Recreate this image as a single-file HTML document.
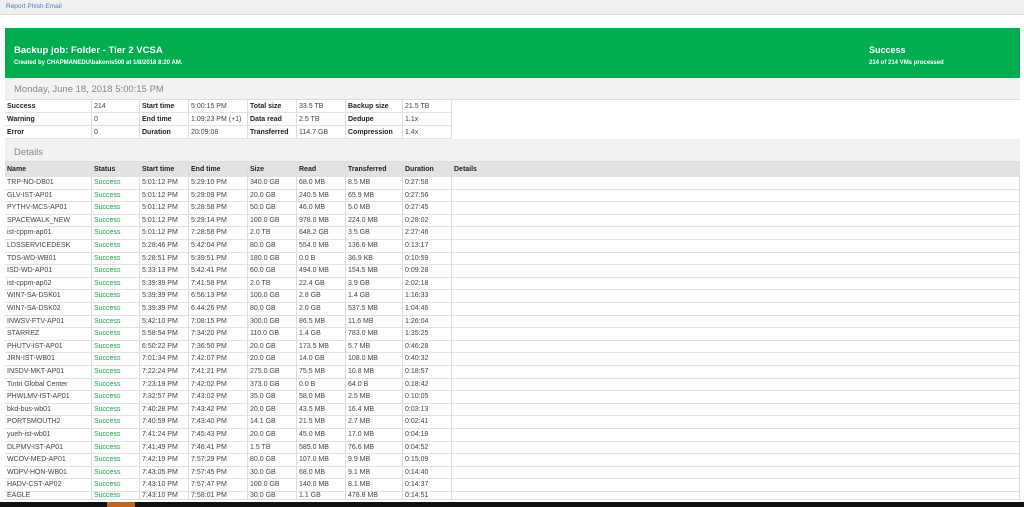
<!DOCTYPE html>
<html><head><meta charset="utf-8"><style>
*{margin:0;padding:0;box-sizing:border-box}
body{width:1024px;height:507px;overflow:hidden;background:#fff;font-family:"Liberation Sans",sans-serif;position:relative;color:#444}
.top{position:absolute;left:0;top:0;width:1024px;height:15px;background:#f0f0f2;border-bottom:1px solid #ddd}
.top span{position:absolute;left:6px;top:3px;font-size:6.5px;color:#3b7fc4}
.green{position:absolute;left:5px;top:28px;width:1015px;height:50px;background:#00ad50;color:#fff}
.g1{position:absolute;left:9px;top:17px;font-size:9.5px;font-weight:bold}
.g2{position:absolute;left:9px;top:32px;font-size:6px;font-weight:bold}
.g3{position:absolute;left:864px;top:17px;font-size:9px;font-weight:bold}
.g4{position:absolute;left:864px;top:32px;font-size:6px;font-weight:bold}
.gray{position:absolute;left:5px;width:1015px;background:#f2f2f2;border-bottom:1px solid #ddd}
.h{position:absolute;left:9px;font-size:9.5px;color:#888}
.c{position:absolute;font-size:7px;white-space:nowrap;height:12.6px;line-height:12.6px;padding-left:2px;border-right:1px solid #ddd;border-bottom:1px solid #e2e2e2;overflow:hidden}
.b{font-weight:bold;color:#222}
.s{color:#1aa64e}
.bar{position:absolute;left:0;top:502px;width:1024px;height:5px;background:#111}
</style></head><body>
<div class="top"><span>Report Phish Email</span></div>
<div class="green"><div class="g1">Backup job: Folder - Tier 2 VCSA</div><div class="g2">Created by CHAPMANEDU\bakonis500 at 1/8/2018 8:20 AM.</div><div class="g3">Success</div><div class="g4">214 of 214 VMs processed</div></div>
<div class="gray" style="top:78px;height:22px"><div class="h" style="top:6px">Monday, June 18, 2018 5:00:15 PM</div></div>
<div class="gray" style="top:139px;height:23px"><div class="h" style="top:8px">Details</div></div>
<div style="position:absolute;left:5px;top:162px;width:1015px;height:15px;background:#e2e2e2"></div>
<div id="t"></div>
<div class="bar"></div>
<div style="position:absolute;left:107px;top:502px;width:28px;height:5px;background:#c0651e"></div>
<script>
var X=[5,92,140,189,248,297,346,403,452,1020];
var out='';
function cell(x,w,y,h,txt,cls){out+='<div class="c '+(cls||'')+'" style="left:'+x+'px;top:'+y+'px;width:'+w+'px;height:'+h+'px;line-height:'+h+'px">'+txt+'</div>';}
var sum=[["Success","214","Start time","5:00:15 PM","Total size","33.5 TB","Backup size","21.5 TB"],["Warning","0","End time","1:09:23 PM (+1)","Data read","2.5 TB","Dedupe","1.1x"],["Error","0","Duration","20:09:08","Transferred","114.7 GB","Compression","1.4x"]];
sum.forEach(function(r,i){var y=100+i*13;r.forEach(function(t,j){cell(X[j],X[j+1]-X[j],y,13,t,j%2==0?'b':'')});});
var hd=["Name","Status","Start time","End time","Size","Read","Transferred","Duration","Details"];
hd.forEach(function(t,j){cell(X[j],X[j+1]-X[j],162,15,t,'b')});
var rows=`TRP-NO-DB01|5:01:12 PM|5:29:10 PM|340.0 GB|68.0 MB|8.5 MB|0:27:58
GLV-IST-AP01|5:01:12 PM|5:29:09 PM|20.0 GB|240.5 MB|65.9 MB|0:27:56
PYTHV-MCS-AP01|5:01:12 PM|5:28:58 PM|50.0 GB|46.0 MB|5.0 MB|0:27:45
SPACEWALK_NEW|5:01:12 PM|5:29:14 PM|100.0 GB|978.0 MB|224.0 MB|0:28:02
ist-cppm-ap01|5:01:12 PM|7:28:58 PM|2.0 TB|648.2 GB|3.5 GB|2:27:46
LDSSERVICEDESK|5:28:46 PM|5:42:04 PM|80.0 GB|554.0 MB|136.6 MB|0:13:17
TDS-WD-WB01|5:28:51 PM|5:39:51 PM|180.0 GB|0.0 B|36.9 KB|0:10:59
ISD-WD-AP01|5:33:13 PM|5:42:41 PM|60.0 GB|494.0 MB|154.5 MB|0:09:28
ist-cppm-ap02|5:39:39 PM|7:41:58 PM|2.0 TB|22.4 GB|3.9 GB|2:02:18
WIN7-SA-DSK01|5:39:39 PM|6:56:13 PM|100.0 GB|2.8 GB|1.4 GB|1:16:33
WIN7-SA-DSK02|5:39:39 PM|6:44:26 PM|80.0 GB|2.0 GB|537.5 MB|1:04:46
INWSV-FTV-AP01|5:42:10 PM|7:08:15 PM|300.0 GB|86.5 MB|11.6 MB|1:26:04
STARREZ|5:58:54 PM|7:34:20 PM|110.0 GB|1.4 GB|783.0 MB|1:35:25
PHUTV-IST-AP01|6:50:22 PM|7:36:50 PM|20.0 GB|173.5 MB|5.7 MB|0:46:28
JRN-IST-WB01|7:01:34 PM|7:42:07 PM|20.0 GB|14.0 GB|108.0 MB|0:40:32
INSDV-MKT-AP01|7:22:24 PM|7:41:21 PM|275.0 GB|75.5 MB|10.8 MB|0:18:57
Tintri Global Center|7:23:19 PM|7:42:02 PM|373.0 GB|0.0 B|64.0 B|0:18:42
PHWLMV-IST-AP01|7:32:57 PM|7:43:02 PM|35.0 GB|58.0 MB|2.5 MB|0:10:05
bkd-bus-wb01|7:40:28 PM|7:43:42 PM|20.0 GB|43.5 MB|16.4 MB|0:03:13
PORTSMOUTH2|7:40:59 PM|7:43:40 PM|14.1 GB|21.5 MB|2.7 MB|0:02:41
yueh-ist-wb01|7:41:24 PM|7:45:43 PM|20.0 GB|45.0 MB|17.0 MB|0:04:19
DLPMV-IST-AP01|7:41:49 PM|7:46:41 PM|1.5 TB|585.0 MB|76.6 MB|0:04:52
WCOV-MED-AP01|7:42:19 PM|7:57:29 PM|80.0 GB|107.0 MB|9.9 MB|0:15:09
WDPV-HON-WB01|7:43:05 PM|7:57:45 PM|30.0 GB|68.0 MB|9.1 MB|0:14:40
HADV-CST-AP02|7:43:10 PM|7:57:47 PM|100.0 GB|140.0 MB|8.1 MB|0:14:37
EAGLE|7:43:10 PM|7:58:01 PM|30.0 GB|1.1 GB|478.8 MB|0:14:51`.split('\n');
rows.forEach(function(r,i){var p=r.split('|');var y=177+i*12.6;var v=[p[0],'Success',p[1],p[2],p[3],p[4],p[5],p[6],''];
v.forEach(function(t,j){if(y<500)cell(X[j],X[j+1]-X[j],y,Math.min(12.6,500-y),t,j==1?'s':'')});});
document.getElementById('t').innerHTML=out;
</script>
</body></html>
